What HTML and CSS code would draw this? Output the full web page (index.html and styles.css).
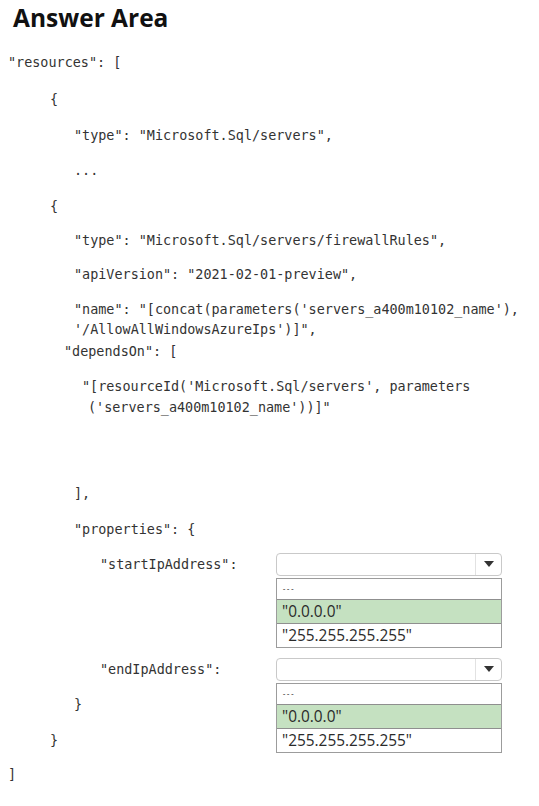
FILE: index.html
```html
<!DOCTYPE html>
<html lang="en">
<head>
<meta charset="utf-8">
<title>Answer Area</title>
<link rel="stylesheet" href="styles.css">
</head>
<body>
<h1 class="title">Answer Area</h1>
<div class="code">
  <div class="ln first">"resources": [</div>
  <div class="ln i1 m17">{</div>
  <div class="ln i2 m16">"type": "Microsoft.Sql/servers",</div>
  <div class="ln i2">...</div>
  <div class="ln i1 m16">{</div>
  <div class="ln i2 m14">"type": "Microsoft.Sql/servers/firewallRules",</div>
  <div class="ln i2 m14">"apiVersion": "2021-02-01-preview",</div>
  <div class="ln i2">"name": "[concat(parameters('servers_a400m10102_name'),</div>
  <div class="ln i2 m0">'/AllowAllWindowsAzureIps')]",</div>
  <div class="ln i2b m2">"dependsOn": [</div>
  <div class="ln i3">"[resourceId('Microsoft.Sql/servers', parameters</div>
  <div class="ln i3b m1">('servers_a400m10102_name'))]"</div>
  <div class="ln i2 m66">],</div>
  <div class="ln i2 m16">"properties": {</div>
  <div class="row r1">
    <div class="ln lbl">"startIpAddress":</div>
    <div class="dropdown">
      <div class="select"><span class="value"></span><span class="arrow"></span></div>
      <ul class="menu">
        <li class="opt placeholder">- - -</li>
        <li class="opt selected">"0.0.0.0"</li>
        <li class="opt">"255.255.255.255"</li>
      </ul>
    </div>
  </div>
  <div class="row r2">
    <div class="ln lbl">"endIpAddress":</div>
    <div class="dropdown">
      <div class="select"><span class="value"></span><span class="arrow"></span></div>
      <ul class="menu">
        <li class="opt placeholder">- - -</li>
        <li class="opt selected">"0.0.0.0"</li>
        <li class="opt">"255.255.255.255"</li>
      </ul>
    </div>
  </div>
  <div class="ln i2 m14">}</div>
  <div class="ln i1 m16">}</div>
  <div class="ln m14">]</div>
</div>
</body>
</html>
```
FILE: styles.css
```css
* { box-sizing: border-box; }

html, body {
  margin: 0;
  padding: 0;
  background: #ffffff;
}

body {
  padding: 0 8px;
  color: #2a2a2a;
}

.title {
  margin: 2px 0 0 5px;
  font-family: "Open Sans", "Noto Sans", sans-serif;
  font-weight: 700;
  font-size: 24.5px;
  line-height: 32px;
  color: #111;
}

.code {
  display: flex;
  flex-direction: column;
  margin-top: 19px;
  font-family: "DejaVu Sans Mono", "Liberation Mono", monospace;
  font-size: 13.45px;
  color: #333;
}

.ln {
  height: 20px;
  line-height: 20px;
  margin-top: 15px;
  white-space: pre;
}

.ln.first { margin-top: 0; }
.m0 { margin-top: 0; }
.m1 { margin-top: 1px; }
.m2 { margin-top: 2px; }
.m14 { margin-top: 14px; }
.m16 { margin-top: 16px; }
.m17 { margin-top: 17px; }
.m66 { margin-top: 66px; }

.i1 { padding-left: 42px; }
.i2 { padding-left: 66px; }
.i2b { padding-left: 56px; }
.i3 { padding-left: 74px; }
.i3b { padding-left: 80px; }

.row {
  display: grid;
  grid-template-columns: 268px 226px;
  align-items: start;
}

.row.r1 { margin-top: 13px; }
.row.r2 { margin-top: 82px; }

.row .lbl {
  margin-top: 2px;
  padding-left: 92px;
}

.dropdown {
  position: relative;
  width: 226px;
}

.select {
  display: flex;
  height: 23px;
  border: 1px solid #c9c9c9;
  border-radius: 4px;
  background: #fff;
}

.select .value { flex: 1; }

.select .arrow {
  width: 26px;
  border-left: 1px solid #e2e2e2;
  position: relative;
}

.select .arrow::after {
  content: "";
  position: absolute;
  left: 8px;
  top: 7px;
  border-left: 5.5px solid transparent;
  border-right: 5.5px solid transparent;
  border-top: 6px solid #333;
}

.menu {
  position: absolute;
  top: 25px;
  left: 0;
  width: 226px;
  margin: 0;
  padding: 0;
  list-style: none;
  border: 1px solid #9c9c9c;
  background: #fff;
  font-family: "Open Sans", "Noto Sans", sans-serif;
  font-size: 15.4px;
  color: #2a2a2a;
}

.opt {
  height: 24px;
  line-height: 24px;
  padding-left: 5px;
  border-top: 1px solid #8f8f8f;
  white-space: nowrap;
}

.opt.placeholder {
  height: 20px;
  line-height: 20px;
  border-top: 0;
  font-size: 7px;
  font-weight: 700;
  color: #666;
  padding-left: 6px;
}

.opt.selected {
  background: #c5e1c1;
}
```
